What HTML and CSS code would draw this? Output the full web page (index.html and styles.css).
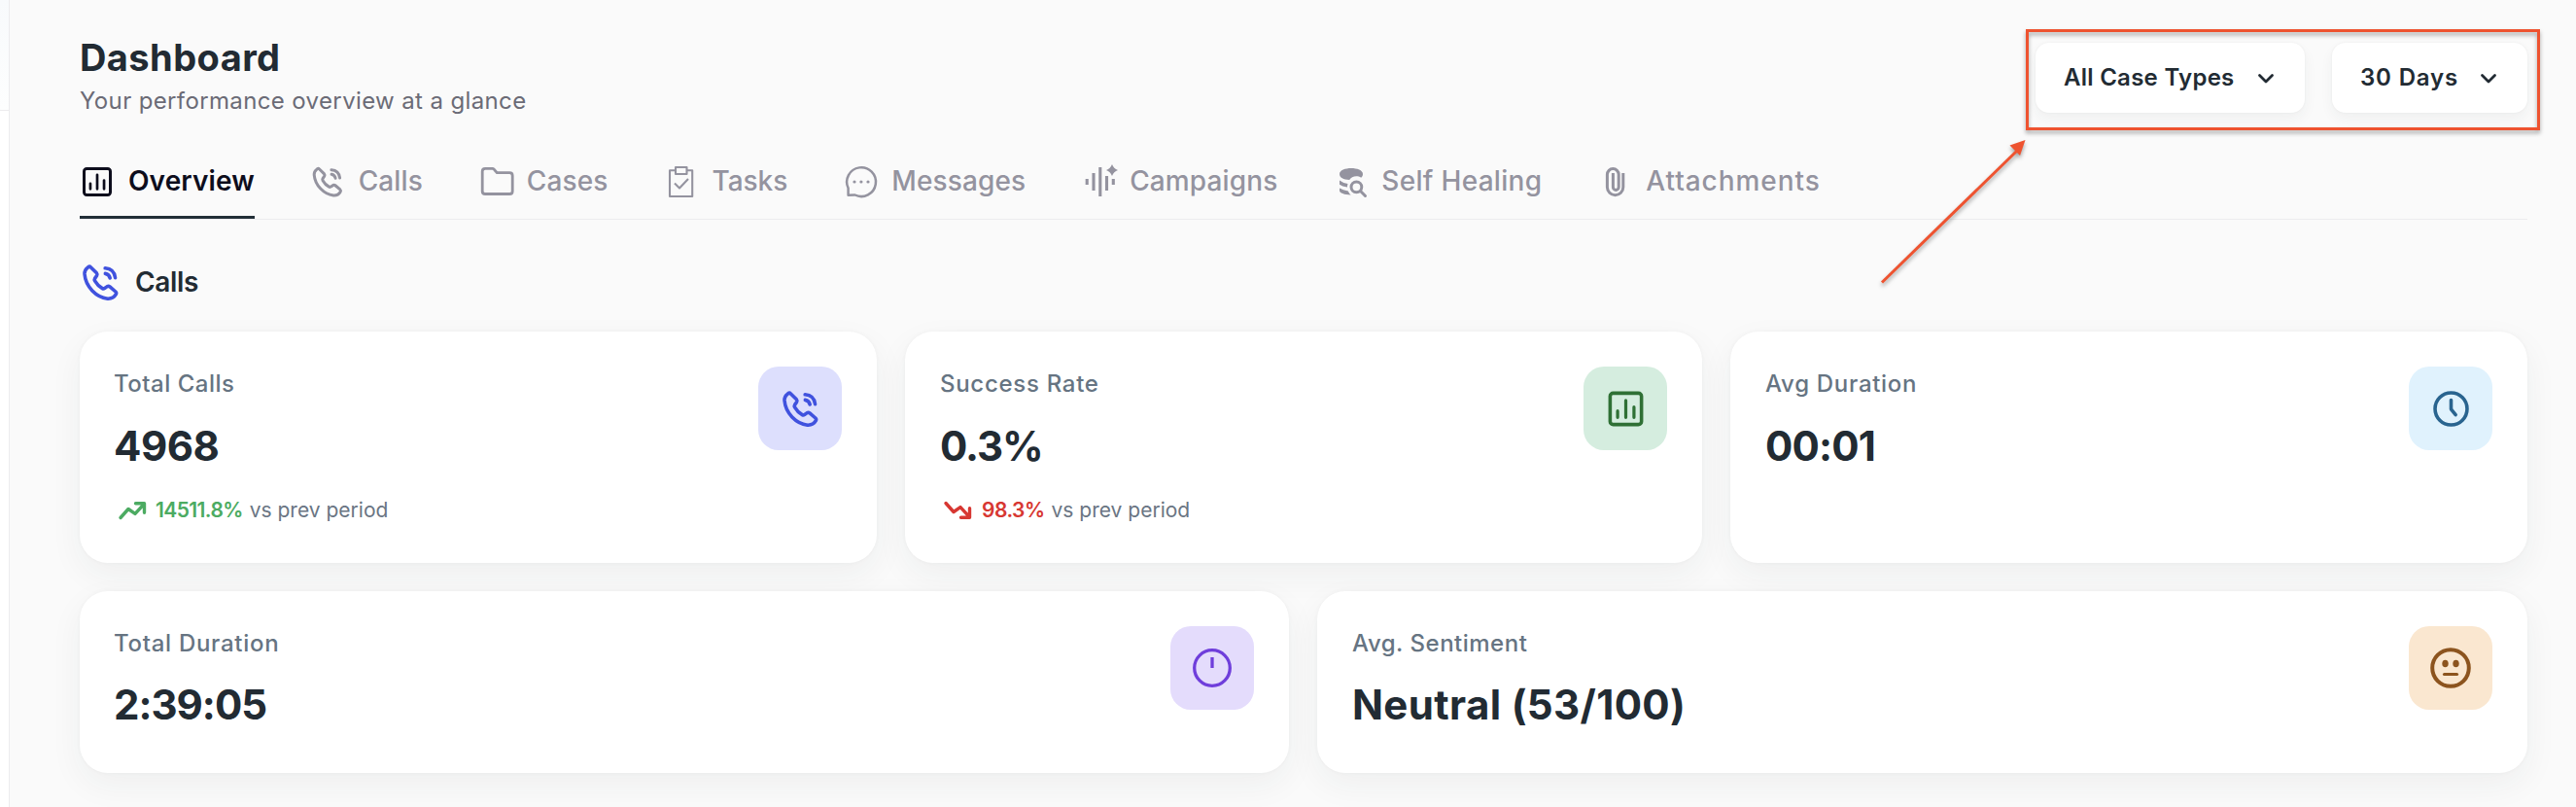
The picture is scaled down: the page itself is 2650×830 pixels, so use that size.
FILE: index.html
```html
<!DOCTYPE html>
<html lang="en">
<head>
<meta charset="utf-8">
<title>Dashboard</title>
<link rel="stylesheet" href="styles.css">
</head>
<body>
<svg class="defs" aria-hidden="true">
  <symbol id="phone" viewBox="0 0 24 24">
    <path d="M4.3 3.7 5 3.1Q5.7 2.6 6.4 3.3L9.7 6.6Q10.3 7.3 9.8 8.1L8.7 9.7Q8.3 10.4 8.7 11.1 10.3 13.9 13 15.4 13.7 15.8 14.3 15.3L15.8 14.3Q16.6 13.9 17.3 14.5L20.6 17.3Q21.3 18 20.8 18.8 19.3 21.5 16 21.3C9.500 20.500 3.400 14.500 2.800 7.200Q2.700 5 4.300 3.700Z"/>
    <path d="M14.600 3.800Q19.800 4.200 20.400 9.300M14.700 6.900Q16.900 7.300 17.400 9.500"/>
  </symbol>
  <symbol id="chart" viewBox="0 0 24 24">
    <rect x="3" y="3" width="18" height="18" rx="1.800"/>
    <path d="M7.300 13.200v3.700M12 7.200v9.700M16.700 11v5.900" stroke-width="1.800"/>
  </symbol>
</svg>
<div class="app">
  <aside class="rail"><div class="rail-head"></div></aside>
  <main class="main">
    <header class="header">
      <div>
        <h1 class="title">Dashboard</h1>
        <p class="subtitle">Your performance overview at a glance</p>
      </div>
      <div class="filters">
        <button class="select select-case"><span class="select-text">All Case Types</span><svg class="chevron" viewBox="0 0 24 24"><path d="M5.500 9.500 12 16l6.500-6.500"/></svg></button>
        <button class="select select-days"><span class="select-text wide">30 Days</span><svg class="chevron" viewBox="0 0 24 24"><path d="M5.500 9.500 12 16l6.500-6.500"/></svg></button>
      </div>
    </header>
    <nav class="tabs">
      <a class="tab active"><svg class="icon"><use href="#chart"/></svg><span class="t-overview">Overview</span></a>
      <a class="tab"><svg class="icon"><use href="#phone"/></svg><span class="t-snug">Calls</span></a>
      <a class="tab"><svg class="icon px" viewBox="0 0 36 36"><path d="M7.200 4.300h7.300q1 0 1.700.8L19.200 8.700h13q3 0 3 3v16q0 2.800-3 2.800h-25q-3 0-3-2.800V7.300q0-3 3-3Z"/></svg><span class="t-snug">Cases</span></a>
      <a class="tab"><svg class="icon thin" viewBox="0 0 36 36"><path d="M12.500 6.300H7V33h23.200V6.300h-5.500M13 3h11.500v7H13ZM12 19.500l5 5 9-9.500"/></svg><span>Tasks</span></a>
      <a class="tab"><svg class="icon line2" viewBox="0 0 36 36"><path d="M5.600 24.500A14.900 14.900 0 1 1 12.500 31.500L5.600 31.700Z"/><g class="solid"><circle cx="12" cy="18" r="1.600"/><circle cx="18.900" cy="18" r="1.600"/><circle cx="26" cy="18" r="1.600"/></g></svg><span class="t-snug">Messages</span></a>
      <a class="tab"><svg class="icon bars" viewBox="0 0 36 36"><path d="M6.200 15v6M13 9v18M19.800 3v30M26.500 12v15M33.300 15v6"/><path class="solid" d="M32 0Q33.700 4.300 38 6 33.700 7.700 32 12 30.300 7.700 26 6 30.300 4.300 32 0Z"/></svg><span class="t-snug">Campaigns</span></a>
      <a class="tab"><svg class="icon px" viewBox="0 0 36 36"><g class="solid"><path d="M7 10C7 2 31 2 31 10c0 2-.8 3-1.800 3.700-4-2.700-10-1.500-12 2.300C11 15.800 7 13.500 7 10Z"/><path d="M7 16.500q3.500 2.800 8.500 3.500-.6 2-.5 3.500Q9.500 22.800 7 20.800ZM7 24.500q3.500 2.300 8.800 2.900 1 2.300 2.900 4.100C12 31.300 7 29.500 7 27Z"/></g><path d="M28.800 27.700l4.700 4.800" stroke-width="3"/><circle cx="24.400" cy="23.300" r="5.400" stroke-width="3"/></svg><span class="t-healing">Self Healing</span></a>
      <a class="tab"><svg class="icon clip" viewBox="0 0 36 36"><path d="M26.800 9v14.500a8.200 8.200 0 0 1-16.400 0v-13a5.900 5.900 0 0 1 11.800 0v13a2.900 2.900 0 0 1-5.800 0V9"/></svg><span class="t-attach">Attachments</span></a>
    </nav>
    <div class="section-head"><svg class="icon"><use href="#phone"/></svg><h2 class="section-title">Calls</h2></div>
    <section class="row row-three">
      <article class="card">
        <div>
          <div class="label label-t l-mid">Total Calls</div>
          <div class="value v-count">4968</div>
          <div class="trend up"><svg class="trend-icon" viewBox="0 0 36 36"><path d="M6 25.500l8-9 7 4.900 9-9.700M21.500 10.700h9v9.500"/></svg><b class="pct tight">14511.8%</b><span>vs prev period</span></div>
        </div>
        <div class="tile indigo"><svg class="icon"><use href="#phone"/></svg></div>
      </article>
      <article class="card">
        <div>
          <div class="label l-wide">Success Rate</div>
          <div class="value v-rate">0.3%</div>
          <div class="trend down"><svg class="trend-icon" viewBox="0 0 36 36"><path d="M6 10.500l8 9 7-4.900 9 9.700M21.500 25.300h9v-9.500"/></svg><b class="pct">98.3%</b><span>vs prev period</span></div>
        </div>
        <div class="tile green"><svg class="icon"><use href="#chart"/></svg></div>
      </article>
      <article class="card">
        <div>
          <div class="label l-wide">Avg Duration</div>
          <div class="value v-time">00:01</div>
        </div>
        <div class="tile sky"><svg class="icon" viewBox="0 0 24 24"><circle cx="12" cy="12" r="9.200"/><path d="M12 7v5.200l2.600 3.200"/></svg></div>
      </article>
    </section>
    <section class="row row-two">
      <article class="card">
        <div>
          <div class="label label-t l-wide">Total Duration</div>
          <div class="value v-total">2:39:05</div>
        </div>
        <div class="tile violet"><svg class="icon raw" viewBox="0 0 44 44"><circle cx="22" cy="22" r="18.300"/><path d="M22 11v11"/></svg></div>
      </article>
      <article class="card">
        <div>
          <div class="label l-mid">Avg. Sentiment</div>
          <div class="value v-text">Neutral (53/100)</div>
        </div>
        <div class="tile amber"><svg class="icon raw heavy" viewBox="0 0 44 44"><circle cx="22" cy="22" r="18.800"/><g class="solid"><ellipse cx="16.500" cy="17.500" rx="3.200" ry="3.800"/><ellipse cx="27.500" cy="17.500" rx="3.200" ry="3.800"/></g><path d="M15.500 28.500h13" stroke-width="3.200"/></svg></div>
      </article>
    </section>
  </main>
  <svg class="annotation" viewBox="0 0 2650 830">
    <rect x="2085.500" y="31.500" width="526" height="101"/>
    <path d="M1936 290.500 2075 155"/>
    <path class="head" d="M2083.500 144 2067.500 149.500 2078 160Z"/>
  </svg>
</div>
</body>
</html>
```
FILE: styles.css
```css
* { box-sizing: border-box; }
body { margin: 0; background: #fafafa; font-family: Inter, "Liberation Sans", sans-serif; color: #222b33; }
h1, h2, p { margin: 0; }
.defs { position: absolute; width: 0; height: 0; }
.app { position: relative; display: flex; width: 2650px; height: 830px; overflow: hidden; }
.rail { width: 10px; background: #fff; border-right: 1px solid #ececee; }
.rail-head { height: 114px; background: linear-gradient(#f8fafc, #fdfefe); border-bottom: 1px solid #ececee; }
.main { flex: 1; padding: 35px 50px 0 72px; }

.header { display: flex; justify-content: space-between; height: 86px; margin-bottom: 48px; }
.title { font-size: 38px; line-height: 48px; font-weight: 700; letter-spacing: .43px; }
.subtitle { margin-top: 3px; font-size: 24px; line-height: 36px; letter-spacing: .37px; color: #6b6b76; }
.filters { display: flex; gap: 28px; margin-top: 9px; }
.select { display: flex; align-items: center; justify-content: space-between; height: 72px; padding: 0 28px 0 29px; border: 0; border-radius: 14px; background: #fff; box-shadow: 0 6px 14px rgba(34, 51, 59, .05), 0 0 3px rgba(0, 0, 0, .05); font: 600 24px/34px Inter, sans-serif; color: #222b33; }
.select-case { width: 277px; }
.select-days { width: 201px; }
.select-text { letter-spacing: .27px; padding-bottom: 1px; }
.select-text.wide { letter-spacing: .83px; }
.chevron { width: 24px; height: 24px; fill: none; stroke: currentColor; stroke-width: 2.8; stroke-linecap: round; stroke-linejoin: round; }

.icon { width: 36px; height: 36px; flex: none; overflow: visible; fill: none; stroke: currentColor; stroke-width: 2; stroke-linecap: round; stroke-linejoin: round; }
.icon.px { stroke-width: 2.8; }
.icon.thin { stroke-width: 2.1; stroke-linecap: butt; }
.icon.line2 { stroke-width: 2.5; }
.icon.bars { stroke-width: 3.1; stroke-linecap: butt; }
.icon.clip { stroke-width: 3; stroke-linecap: butt; }
.solid { fill: currentColor; stroke: none; }

.tabs { display: flex; gap: 56.9px; border-bottom: 1px solid #ececee; }
.tab { display: flex; gap: 14px; height: 56px; font-size: 28px; line-height: 34px; font-weight: 500; color: #94939f; white-space: nowrap; border-bottom: 3px solid transparent; }
.tab.active { color: #0d0d1c; font-weight: 600; border-color: #222e37; }
.t-overview { letter-spacing: .1px; }
.t-snug { letter-spacing: .13px; }
.t-healing { letter-spacing: .3px; }
.t-attach { letter-spacing: .95px; }

.section-head { display: flex; gap: 14px; margin: 43px 0 29px; height: 43px; color: #4052de; }
.section-head .icon { width: 43px; height: 43px; }
.section-title { font-size: 28px; line-height: 42px; font-weight: 600; letter-spacing: -.35px; color: #222b33; }

.row { display: grid; gap: 29px; margin-bottom: 29px; }
.row-three { grid-template-columns: repeat(3, 1fr); grid-template-rows: 238px; }
.row-two { grid-template-columns: 1244px 1245px; grid-template-rows: 187px; }
.card { display: flex; justify-content: space-between; align-items: flex-start; padding: 36px; border-radius: 29px; background: #fff; box-shadow: 0 12px 34px rgba(34, 51, 59, .055), 0 0 4px rgba(0, 0, 0, .04); }
.label { padding-top: 1px; font-size: 24px; line-height: 34px; font-weight: 500; color: #667482; }
.label-t { margin-left: -1px; }
.l-mid { letter-spacing: .5px; }
.l-wide { letter-spacing: .71px; }
.value { margin: 19px 0 20px; font-size: 42px; line-height: 56px; font-weight: 700; }
.row-two .value { margin-top: 18px; }
.value.v-count { margin-left: -1px; letter-spacing: -.5px; }
.v-rate { letter-spacing: -1.1px; }
.v-time { letter-spacing: -.8px; }
.value.v-total { margin-left: -1px; letter-spacing: -1px; }
.v-text { letter-spacing: .36px; }
.trend { display: flex; align-items: flex-start; gap: 7px; font-size: 21px; line-height: 36px; color: #6a7583; }
.trend-icon { width: 36px; height: 36px; fill: none; stroke: currentColor; stroke-width: 3.4; stroke-linecap: round; stroke-linejoin: round; }
.pct { font-weight: 600; letter-spacing: -.5px; }
.pct.tight { margin-left: -1px; letter-spacing: -.6px; }
.up .trend-icon, .up .pct { color: #4cab62; }
.down .trend-icon, .down .pct { color: #d73732; }

.tile { display: flex; align-items: center; justify-content: center; width: 86px; height: 86px; border-radius: 21px; }
.tile .icon { width: 43px; height: 43px; }
.icon.raw { stroke-width: 3.3; stroke-linecap: butt; }
.tile .icon.raw { width: 44px; height: 44px; }
.icon.raw.heavy { stroke-width: 4; stroke-linecap: round; }
.indigo { background: #dddffd; color: #4052de; }
.green { background: #d5eddf; color: #2f7035; }
.sky { background: #e0f2fd; color: #29648f; }
.violet { background: #e4dcfc; color: #6f3edb; }
.amber { background: #fae7d0; color: #8c541e; }

.annotation { position: absolute; inset: 0; width: 2650px; height: 830px; fill: none; stroke: #ee5330; stroke-width: 3; pointer-events: none; filter: drop-shadow(0 3px 2px rgba(0, 0, 0, .35)); }
.annotation .head { fill: #ee5330; stroke: none; }
```
